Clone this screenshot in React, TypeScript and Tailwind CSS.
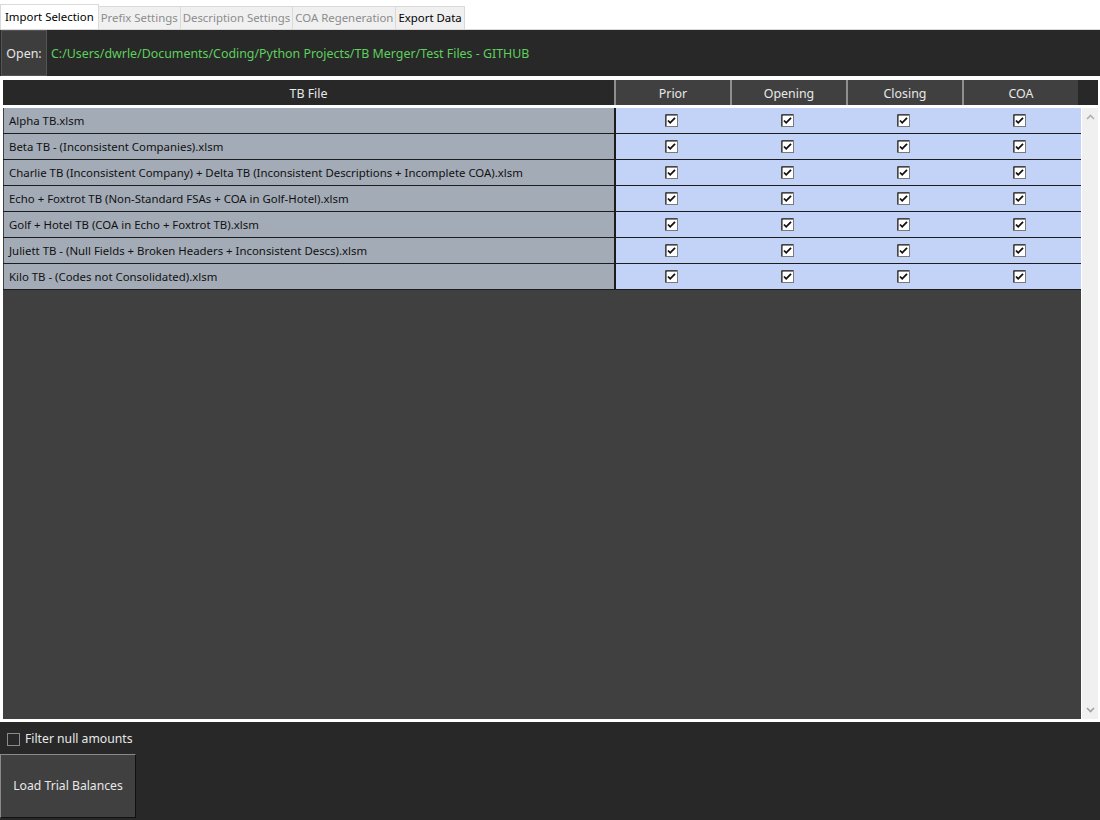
import React from "react";

const files = [
  "Alpha TB.xlsm",
  "Beta TB - (Inconsistent Companies).xlsm",
  "Charlie TB (Inconsistent Company) + Delta TB (Inconsistent Descriptions + Incomplete COA).xlsm",
  "Echo + Foxtrot TB (Non-Standard FSAs + COA in Golf-Hotel).xlsm",
  "Golf + Hotel TB (COA in Echo + Foxtrot TB).xlsm",
  "Juliett TB - (Null Fields + Broken Headers + Inconsistent Descs).xlsm",
  "Kilo TB - (Codes not Consolidated).xlsm",
];

const cols = ["Prior", "Opening", "Closing", "COA"];

function Check() {
  return (
    <svg width="13" height="13" viewBox="0 0 13 13">
      <rect x="0.5" y="0.5" width="12" height="12" fill="#fff" stroke="#7a7a7a" />
      <path d="M1 12V1h11" fill="none" stroke="#111" strokeWidth="1" />
      <path d="M3 6.5l2.2 2.3L10 3.8" fill="none" stroke="#111" strokeWidth="1.8" />
    </svg>
  );
}

export default function App() {
  return (
    <div className="w-[1100px] h-[820px] bg-white flex flex-col text-[11.4px] font-['Noto_Sans',sans-serif] overflow-hidden">
      {/* Tabs */}
      <div className="h-[30px] pt-[5px] flex items-end bg-white border-b border-[#d9d9d9]">
        <div className="h-[25px] px-[4px] flex items-center bg-white border border-b-0 border-[#d9d9d9] text-black">
          Import Selection
        </div>
        <div className="h-[23px] px-[2px] flex items-center bg-[#f0f0f0] border border-b-0 border-l-0 border-[#d9d9d9] text-[#8c8c8c]">
          Prefix Settings
        </div>
        <div className="h-[23px] px-[2px] flex items-center bg-[#f0f0f0] border border-b-0 border-l-0 border-[#d9d9d9] text-[#8c8c8c]">
          Description Settings
        </div>
        <div className="h-[23px] px-[2px] flex items-center bg-[#f0f0f0] border border-b-0 border-l-0 border-[#d9d9d9] text-[#8c8c8c]">
          COA Regeneration
        </div>
        <div className="h-[23px] px-[2px] flex items-center bg-[#f0f0f0] border border-b-0 border-l-0 border-[#d9d9d9] text-black">
          Export Data
        </div>
      </div>

      {/* Open bar */}
      <div className="h-[46px] bg-[#272827] flex items-stretch">
        <button className="w-[46px] ml-[1px] pt-[2px] bg-[#3d3d3d] border border-[#555] text-[#e6e6e6] text-[12.4px] flex items-center justify-center">
          Open:
        </button>
        <div className="flex items-center pl-[4px] pt-[2px] text-[12.4px] text-[#5fcf5f]">
          C:/Users/dwrle/Documents/Coding/Python Projects/TB Merger/Test Files - GITHUB
        </div>
      </div>

      {/* Table */}
      <div className="flex-1 flex flex-col pt-[4px] pl-[3px] pr-[2px] pb-[3px] bg-white">
        <div className="h-[25px] flex bg-[#272827] text-[#e8e8e8] text-[12.4px]">
          <div className="w-[611px] pt-[3px] flex items-center justify-center">TB File</div>
          {cols.map((c) => (
            <div
              key={c}
              className="w-[116px] pt-[3px] flex items-center justify-center bg-[#404040] border-l-2 border-[#8f8f8f]"
            >
              {c}
            </div>
          ))}
          <div className="flex-1" />
        </div>
        <div className="flex-1 flex mt-[3px]">
          <div className="w-[1078px] bg-[#404040] flex flex-col">
            {files.map((f) => (
              <div key={f} className="h-[26px] flex border-b border-[#1c1c1c]">
                <div className="w-[612px] ml-[1px] pt-[1px] bg-[#a3abb6] border-r-2 border-[#1c1c1c] flex items-center pl-[5px] text-[#111]">
                  {f}
                </div>
                <div className="flex-1 bg-[#c3d2f7] flex">
                  {cols.map((c) => (
                    <div key={c} className="w-[116px] pr-[6px] flex items-center justify-center">
                      <Check />
                    </div>
                  ))}
                </div>
              </div>
            ))}
          </div>
          <div className="flex-1 bg-[#f0f0f0] flex flex-col justify-between items-center py-[6px] ml-[1px]">
            <svg width="9" height="6" viewBox="0 0 9 6">
              <path d="M1 5l3.5-3.5L8 5" fill="none" stroke="#b0b0b0" strokeWidth="1.6" />
            </svg>
            <svg width="9" height="6" viewBox="0 0 9 6">
              <path d="M1 1l3.5 3.5L8 1" fill="none" stroke="#a0a0a0" strokeWidth="1.6" />
            </svg>
          </div>
        </div>
      </div>

      {/* Bottom */}
      <div className="h-[98px] bg-[#272827] flex flex-col text-[12.2px]">
        <label className="flex items-center gap-[5px] pl-[7px] mt-[10px] h-[14px] text-[#e8e8e8]">
          <span className="w-[13px] h-[13px] border border-[#8a8a8a] bg-[#272827]" />
          Filter null amounts
        </label>
        <button className="mt-[8px] w-[136px] h-[64px] bg-[#404040] border border-[#8a8a8a] border-r-[#111] border-b-[#111] text-[#e8e8e8]">
          Load Trial Balances
        </button>
      </div>
    </div>
  );
}
